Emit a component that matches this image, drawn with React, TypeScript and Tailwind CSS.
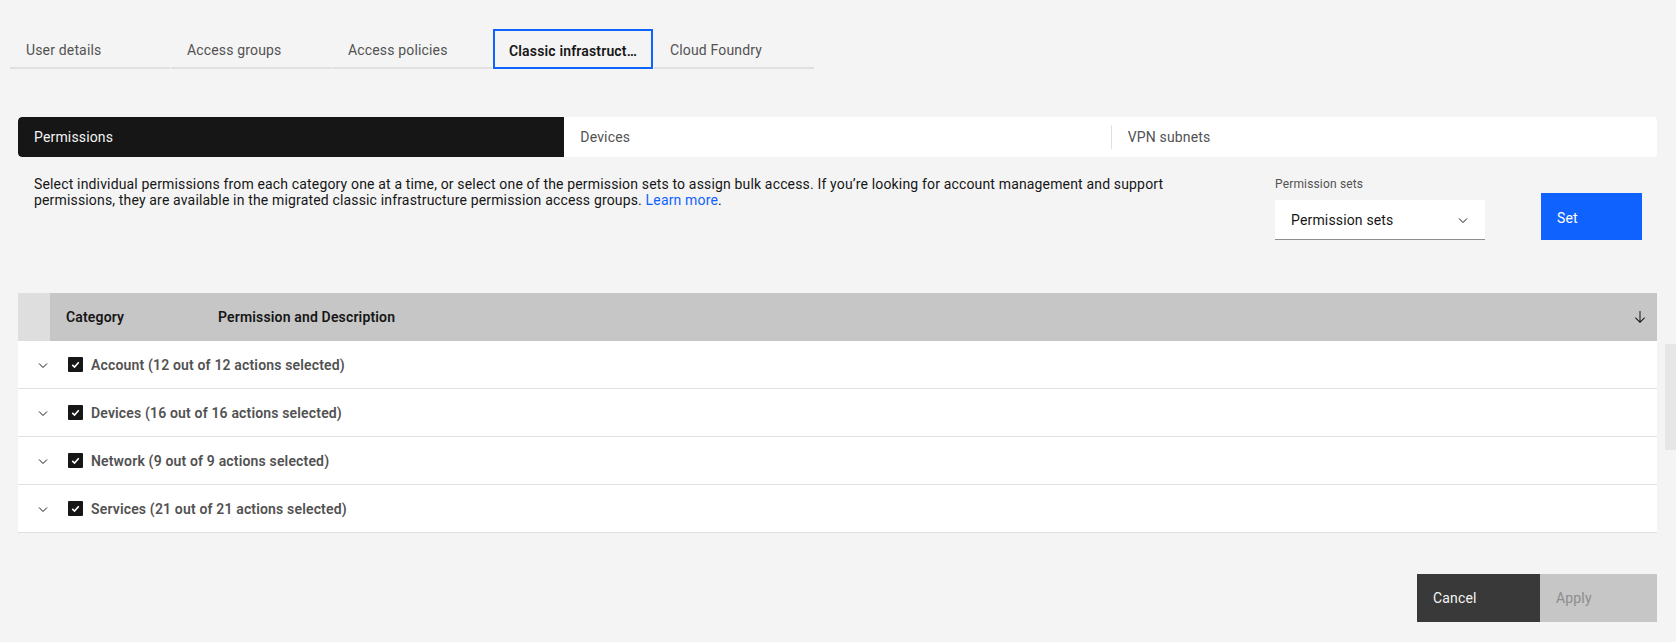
import React from "react";

type Category = {
    name: string;
    selected: number;
    total: number;
};

const topTabs = ["User details", "Access groups", "Access policies", "Classic infrastructure", "Cloud Foundry"];

const categories: Category[] = [
    { name: "Account", selected: 12, total: 12 },
    { name: "Devices", selected: 16, total: 16 },
    { name: "Network", selected: 9, total: 9 },
    { name: "Services", selected: 21, total: 21 },
];

function ChevronDown({ className }: { className?: string }) {
    return (
        <svg viewBox="0 0 16 16" className={className} fill="none" stroke="currentColor" strokeWidth="1">
            <path d="M4 6.5 8 10.5 12 6.5" />
        </svg>
    );
}

function CheckBox() {
    return (
        <span className="flex h-[15px] w-[15px] items-center justify-center rounded-[1px] bg-[#161616]">
            <svg viewBox="0 0 16 16" className="h-[13px] w-[13px]" fill="none" stroke="#fff" strokeWidth="2">
                <path d="M4 8.5 6.8 11.2 12 5.2" />
            </svg>
        </span>
    );
}

export default function App(): JSX.Element {
    const activeTop = 3;

    return (
        <div className="relative min-h-[642px] bg-[#f4f4f4] font-['Roboto',sans-serif] tracking-[0.16px] text-[#161616]">
            {/* top tabs */}
            <div className="flex gap-px pl-[10px] pt-[29px]">
                {topTabs.map((tab, i) =>
                    i === activeTop ? (
                        <div key={tab} className="flex h-[40px] w-[160px] items-center border-2 border-[#0f62fe] px-[14px] pt-[4px] text-sm font-semibold text-[#161616]">
                            <span className="truncate">{tab}</span>
                        </div>
                    ) : (
                        <div key={tab} className="flex h-[40px] w-[160px] items-center border-b-2 border-[#e0e0e0] px-4 pt-[4px] text-sm text-[#525252]">
                            <span className="truncate">{tab}</span>
                        </div>
                    )
                )}
            </div>

            <div className="pl-[18px] pr-[19px]">
                {/* contained tabs */}
                <div className="mt-[48px] grid h-[40px] grid-cols-3 overflow-hidden rounded bg-white text-sm">
                    <div className="flex items-center rounded-l bg-[#161616] px-4 text-[#f4f4f4]">Permissions</div>
                    <div className="flex items-center px-4 text-[#525252]">Devices</div>
                    <div className="flex items-center text-[#525252]">
                        <span className="h-[24px] w-px bg-[#e0e0e0]" />
                        <span className="pl-4">VPN subnets</span>
                    </div>
                </div>

                {/* description + permission sets */}
                <div className="flex items-start pl-4 pr-[15px] pt-[19px]">
                    <p className="w-[1160px] text-sm leading-4">
                        Select individual permissions from each category one at a time, or select one of the permission sets to assign bulk access. If you’re looking for account management and support permissions, they are available in the migrated classic infrastructure permission access groups.{" "}
                        <a className="text-[#0f62fe]">Learn more</a>.
                    </p>
                    <div className="ml-auto flex items-end gap-[56px]">
                        <div className="flex flex-col">
                            <label className="text-xs leading-4 text-[#525252]">Permission sets</label>
                            <div className="mt-2 flex h-[40px] w-[210px] items-center justify-between border-b border-[#8d8d8d] bg-white pl-4 pr-[14px] text-sm">
                                <span>Permission sets</span>
                                <ChevronDown className="h-4 w-4 text-[#161616]" />
                            </div>
                        </div>
                        <button className="flex h-[47px] w-[101px] items-start bg-[#0f62fe] px-4 pt-[15px] text-left text-sm text-white">
                            Set
                        </button>
                    </div>
                </div>

                {/* table */}
                <div className="mt-[53px]">
                    <div className="flex h-[48px] items-center bg-[#c6c6c6] text-sm font-semibold">
                        <div className="h-full w-[32px] bg-[#dedede]" />
                        <div className="w-[152px] px-4">Category</div>
                        <div className="flex-1 px-4">Permission and Description</div>
                        <svg viewBox="0 0 32 32" className="mr-[9px] h-4 w-4" fill="#161616">
                            <path d="M24.59 16.59 17 24.17V4h-2v20.17l-7.59-7.58L6 18l10 10 10-10-1.41-1.41z" />
                        </svg>
                    </div>
                    {categories.map((c) => (
                        <div key={c.name} className="flex h-[48px] items-center border-b border-[#e0e0e0] bg-white pl-[17px]">
                            <ChevronDown className="h-4 w-4 text-[#161616]" />
                            <span className="ml-[17px]">
                                <CheckBox />
                            </span>
                            <span className="ml-[8px] text-sm font-semibold text-[#525252]">
                                {c.name} ({c.selected} out of {c.total} actions selected)
                            </span>
                        </div>
                    ))}
                </div>

                {/* footer buttons */}
                <div className="mt-[41px] flex justify-end">
                    <button className="flex h-[48px] w-[123px] items-center bg-[#393939] px-4 text-sm text-[#f4f4f4]">Cancel</button>
                    <button className="flex h-[48px] w-[117px] items-center bg-[#c6c6c6] px-4 text-sm text-[#8d8d8d]">Apply</button>
                </div>
            </div>

            {/* scroll indicator */}
            <div className="absolute right-0 top-[344px] h-[106px] w-[11px] bg-[#e6e6e6]" />
        </div>
    );
}
